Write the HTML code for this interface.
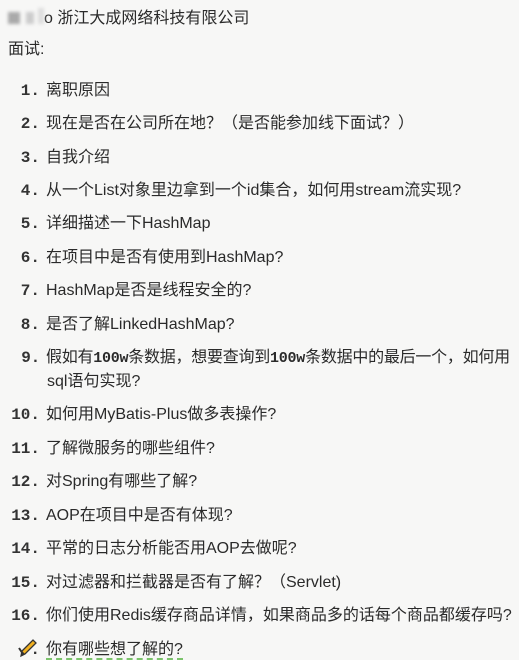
<!DOCTYPE html>
<html><head><meta charset="utf-8"><style>
html,body{margin:0;padding:0}
body{width:519px;height:660px;background:#f7f7f6;position:relative;overflow:hidden;font-family:"Liberation Sans","Noto Sans CJK SC",sans-serif;color:#2a2a2a;font-size:16px}
.l{position:absolute;left:0;white-space:nowrap;line-height:20px}
.n{display:inline-block;width:40px;text-align:right;font-family:"Liberation Mono","DejaVu Sans Mono",monospace;font-size:16px;font-weight:bold;margin-right:6px;color:#333}
.t{position:absolute;left:47px;white-space:nowrap;line-height:20px}
.m{font-family:"Liberation Mono",monospace;font-size:15px;font-weight:bold}
.blur{display:inline-block;height:12px;background:#bbb;vertical-align:-1px;filter:blur(1.5px)}
</style></head><body>
<div class="l" style="top:8px;left:8px"><span class="blur" style="width:12px;background:#aaa"></span><span class="blur" style="width:8px;margin-left:6px;background:#ccc"></span><span class="blur" style="width:6px;margin-left:4px;height:16px;background:#ddd"></span>o 浙江大成网络科技有限公司</div>
<div class="l" style="top:40px;left:8px">面试:</div>
<div class="l" style="top:81px"><span class="n">1.</span>离职原因</div>
<div class="l" style="top:114px"><span class="n">2.</span>现在是否在公司所在地？（是否能参加线下面试？）</div>
<div class="l" style="top:148px"><span class="n">3.</span>自我介绍</div>
<div class="l" style="top:181px"><span class="n">4.</span>从一个List对象里边拿到一个id集合，如何用stream流实现?</div>
<div class="l" style="top:214px"><span class="n">5.</span>详细描述一下HashMap</div>
<div class="l" style="top:248px"><span class="n">6.</span>在项目中是否有使用到HashMap?</div>
<div class="l" style="top:281px"><span class="n">7.</span>HashMap是否是线程安全的?</div>
<div class="l" style="top:315px"><span class="n">8.</span>是否了解LinkedHashMap?</div>
<div class="l" style="top:348px;letter-spacing:-0.25px"><span class="n">9.</span>假如有<span class="m">100w</span>条数据，想要查询到<span class="m">100w</span>条数据中的最后一个，如何用</div>
<div class="t" style="top:372px">sql语句实现?</div>
<div class="l" style="top:405px"><span class="n">10.</span>如何用MyBatis-Plus做多表操作?</div>
<div class="l" style="top:439px"><span class="n">11.</span>了解微服务的哪些组件?</div>
<div class="l" style="top:472px"><span class="n">12.</span>对Spring有哪些了解?</div>
<div class="l" style="top:506px"><span class="n">13.</span>AOP在项目中是否有体现?</div>
<div class="l" style="top:539px"><span class="n">14.</span>平常的日志分析能否用AOP去做呢?</div>
<div class="l" style="top:573px"><span class="n">15.</span>对过滤器和拦截器是否有了解？（Servlet)</div>
<div class="l" style="top:606px"><span class="n">16.</span>你们使用Redis缓存商品详情，如果商品多的话每个商品都缓存吗?</div>
<div class="l" style="top:640px"><span class="n" style="position:relative"><svg style="position:absolute;left:18px;top:-2px" width="20" height="20" viewBox="0 0 20 20"><path d="M3 18 L4 13 L15 2 L18 5 L7 16 Z" fill="#f0b020" stroke="#333" stroke-width="1.3"/><path d="M3 18 L4 13 L7 16 Z" fill="#333"/><path d="M1 10 L5 16" stroke="#333" stroke-width="2"/></svg><span style="visibility:hidden">17</span>.</span><span style="border-bottom:2px dashed #7bc36b">你有哪些想了解的?</span></div>
</body></html>
